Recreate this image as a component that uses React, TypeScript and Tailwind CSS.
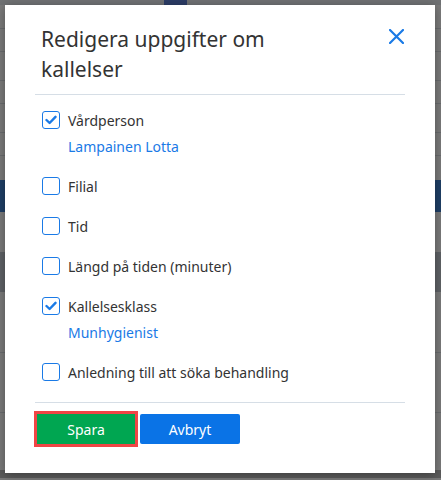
import React from "react";

const items = [
  { label: "Vårdperson", checked: true, value: "Lampainen Lotta" },
  { label: "Filial", checked: false },
  { label: "Tid", checked: false },
  { label: "Längd på tiden (minuter)", checked: false },
  { label: "Kallelsesklass", checked: true, value: "Munhygienist" },
  { label: "Anledning till att söka behandling", checked: false },
];

function Checkbox({ checked }: { checked: boolean }) {
  return (
    <span className="flex h-[18px] w-[18px] shrink-0 items-center justify-center rounded-[3px] border-[1.5px] border-[#1a7ae6] bg-white">
      {checked && (
        <svg width="12" height="10" viewBox="0 0 12 10" fill="none">
          <path d="M1.5 5 L4.6 8 L10.5 1.8" stroke="#1a7ae6" strokeWidth="2.4" strokeLinecap="round" strokeLinejoin="round" />
        </svg>
      )}
    </span>
  );
}

export default function App() {
  return (
    <div className="relative h-[480px] w-[441px] overflow-hidden bg-[#7b7b7b] font-['Noto_Sans',sans-serif]">
      {/* dimmed page behind the dialog */}
      <div className="flex flex-col">
        <div className="flex h-[5px] bg-[#707274]">
          <div className="ml-[164px] h-full w-[23px] bg-[#2c3d66]" />
        </div>
        <div className="h-[24px] border-b border-[#6a6c6f]" />
        <div className="h-[23px] border-b border-[#6a6c6f]" />
        <div className="h-[29px] border-b border-[#6a6c6f]" />
        <div className="h-[23px] border-b border-[#6a6c6f]" />
        <div className="h-[29px] border-b border-[#6a6c6f]" />
        <div className="h-[23px] border-b border-[#6a6c6f]" />
        <div className="h-[24px]" />
        <div className="h-[32px] bg-[#1f3f66]" />
        <div className="h-[40px]" />
        <div className="h-[40px] bg-[#5f6266]" />
        <div className="h-[61px] border-b border-[#6a6c6f]" />
        <div className="h-[60px] border-b border-[#6a6c6f]" />
        <div className="h-[57px]" />
        <div className="h-[8px] bg-[#5c5c5c]" />
      </div>

      {/* dialog */}
      <div className="absolute left-[5px] top-[5px] flex h-[468px] w-[430px] flex-col bg-white px-[30px] pt-[19px] shadow-[0_2px_10px_rgba(0,0,0,0.35)]">
        <div className="flex items-start justify-between pl-[6px]">
          <h2 className="text-[21px] leading-[30px] text-[#333333]">
            Redigera uppgifter om
            <br />
            kallelser
          </h2>
          <button className="mt-[4px] mr-[1px] flex h-[16px] w-[16px] items-center justify-center">
            <svg width="15" height="15" viewBox="0 0 15 15" fill="none">
              <path d="M1 1 L14 14 M14 1 L1 14" stroke="#1a7ae6" strokeWidth="2.2" strokeLinecap="round" />
            </svg>
          </button>
        </div>

        <div className="mt-[10px] h-px bg-[#d6dee6]" />

        <div className="flex flex-col gap-4 pt-[13px] pl-[7px]">
          {items.map((it) => (
            <div key={it.label} className="flex flex-col">
              <label className="flex h-[24px] items-center gap-2 text-[14px] text-[#333333]">
                <Checkbox checked={it.checked} />
                {it.label}
              </label>
              {it.value && (
                <div className="mt-1 h-[22px] pl-[26px] text-[14px] leading-[22px] text-[#1a7ae6]">
                  {it.value}
                </div>
              )}
            </div>
          ))}
        </div>

        <div className="mt-[18px] h-px bg-[#d6dee6]" />

        <div className="mt-[8px] flex items-center gap-[2px]">
          <div className="-ml-px border-[3px] border-[#f04545]">
            <button className="h-[30px] w-[98px] bg-[#00a651] text-[14px] text-white">Spara</button>
          </div>
          <button className="h-[30px] w-[100px] rounded-[2px] bg-[#0a73e6] text-[14px] text-white">Avbryt</button>
        </div>
      </div>
    </div>
  );
}
